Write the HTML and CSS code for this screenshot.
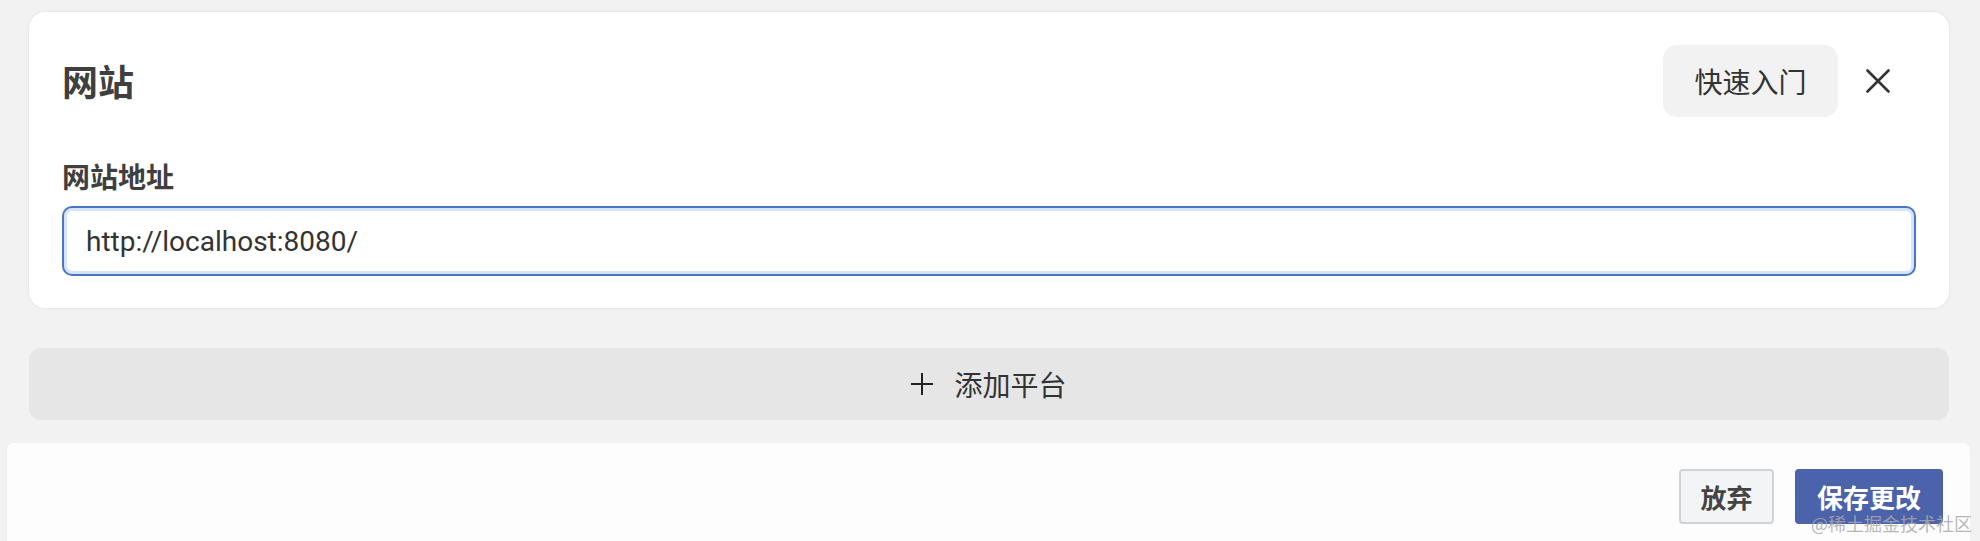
FILE: index.html
```html
<!DOCTYPE html>
<html lang="zh">
<head>
<meta charset="utf-8">
<title>网站</title>
<link rel="stylesheet" href="styles.css">
</head>
<body>
<div class="main">
  <section class="card">
    <header class="card-head">
      <h1 class="title">网站</h1>
      <div class="head-actions">
        <button class="quick">快速入门</button>
        <button class="close" aria-label="关闭">
          <svg width="24" height="24" viewBox="0 0 24 24"><path d="M1.5 1.5 L22.5 22.5 M22.5 1.5 L1.5 22.5" stroke="#333" stroke-width="2.6" stroke-linecap="round" fill="none"/></svg>
        </button>
      </div>
    </header>
    <label class="field-label">网站地址</label>
    <div class="input">http://localhost:8080/</div>
  </section>
  <button class="add-bar">
    <svg class="plus" width="22" height="22" viewBox="0 0 22 22"><path d="M11 0 V22 M0 11 H22" stroke="#222" stroke-width="2" fill="none"/></svg>
    <span>添加平台</span>
  </button>
</div>
<footer class="footer">
  <button class="btn btn-discard">放弃</button>
  <button class="btn btn-save">保存更改</button>
</footer>
<div class="watermark">@稀土掘金技术社区</div>
</body>
</html>
```

FILE: styles.css
```css
html, body {
  margin: 0;
  padding: 0;
  height: 100%;
  overflow: hidden;
}
body {
  background: #f2f2f2;
  font-family: "Noto Sans CJK SC", "Noto Sans", sans-serif;
  color: #333;
  position: relative;
}
button {
  font-family: inherit;
  cursor: pointer;
}
.main {
  padding: 12px 31px 0 29px;
}
.card {
  background: #fff;
  border-radius: 16px;
  box-shadow: 0 0 3px rgba(0,0,0,0.10);
  padding: 33px 33px 32px 33px;
}
.card-head {
  display: flex;
  align-items: center;
  justify-content: space-between;
  height: 72px;
}
.title {
  margin: 0;
  font-size: 36px;
  font-weight: 700;
  color: #3f3f3f;
  line-height: 1;
  position: relative;
  top: -1px;
}
.head-actions {
  display: flex;
  align-items: center;
  gap: 20px;
  padding-right: 18px;
}
.quick {
  width: 175px;
  height: 72px;
  border: none;
  border-radius: 14px;
  background: #f2f2f2;
  font-size: 28px;
  color: #333;
  padding: 0;
}
.close {
  width: 40px;
  height: 40px;
  border: none;
  background: transparent;
  padding: 0;
  display: flex;
  align-items: center;
  justify-content: center;
}
.field-label {
  display: block;
  margin-top: 41px;
  font-size: 28px;
  font-weight: 700;
  line-height: 36px;
  color: #3f3f3f;
}
.input {
  margin-top: 12px;
  height: 70px;
  box-sizing: border-box;
  border: 2px solid #4676c4;
  border-radius: 10px;
  box-shadow: inset 0 0 0 3px #d5e4f9;
  padding: 0 22px;
  display: flex;
  align-items: center;
  font-family: Roboto, "Noto Sans", sans-serif;
  font-size: 28px;
  color: #333;
}
.add-bar {
  margin-top: 40px;
  width: 100%;
  height: 72px;
  border: none;
  border-radius: 12px;
  background: #e6e6e6;
  display: flex;
  align-items: center;
  justify-content: center;
  gap: 21px;
  font-size: 28px;
  color: #333;
  padding: 0;
}
.plus {
  display: block;
}
.footer {
  margin: 22px 9px 0 6px;
  height: 99px;
  background: #fdfdfd;
  border: 1px solid #f0f0f0;
  border-bottom: none;
  border-radius: 7px 7px 0 0;
  box-sizing: border-box;
  padding: 26px 27px 0 0;
  display: flex;
  justify-content: flex-end;
  align-items: flex-start;
  gap: 21px;
}
.btn {
  height: 55px;
  font-size: 26px;
  font-weight: 700;
  border-radius: 4px;
  line-height: 1;
}
.btn-discard {
  width: 95px;
  border: 2px solid #d2d3d5;
  background: #f3f4f6;
  color: #444;
}
.btn-save {
  width: 148px;
  border: none;
  background: #4a63aa;
  color: #fff;
}
.watermark {
  position: absolute;
  right: 8px;
  top: 511px;
  font-size: 18px;
  line-height: 24px;
  color: rgba(170,170,170,0.85);
  letter-spacing: 0;
}
```
